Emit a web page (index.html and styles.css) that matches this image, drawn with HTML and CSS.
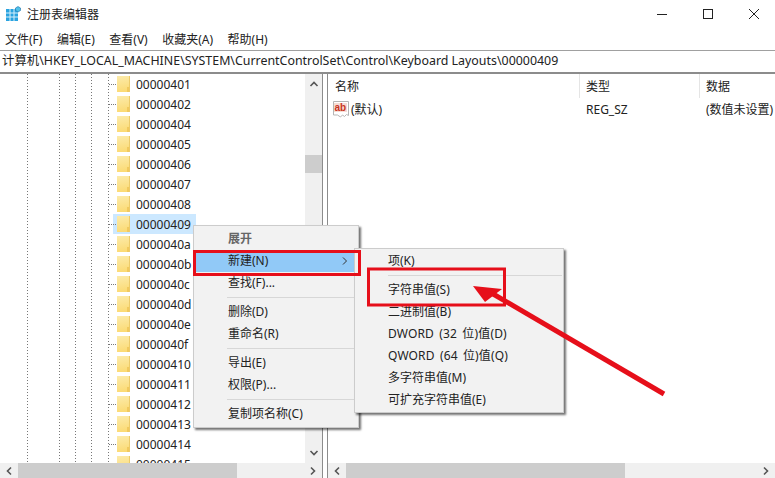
FILE: index.html
```html
<!DOCTYPE html>
<html lang="zh-CN">
<head>
    <meta charset="UTF-8">
    <title>注册表编辑器</title>
    <link rel="stylesheet" href="styles.css">
</head>
<body>
    <div class="window">
        <div class="titlebar">
            <svg class="app-icon" width="15" height="16" viewBox="0 0 15 16">
                <rect x="0" y="3" width="12" height="12" fill="#2aa3e0"/>
                <path d="M4 3v12M8 3v12M0 7h12M0 11h12" stroke="#d5effa" stroke-width="1"/>
                <path d="M12 0.5l2.5 1.5v2.5l-2.5 1.5-2.5-1.5v-2.5z" fill="#4fc1e9" stroke="#1b6fa8" stroke-width="0.6"/>
            </svg>
            <span class="title">注册表编辑器</span>
            <div class="controls">
                <svg width="10" height="10" viewBox="0 0 10 10"><path d="M0 5.5h10" stroke="#222" fill="none"/></svg>
                <svg width="10" height="10" viewBox="0 0 10 10"><rect x="0.5" y="0.5" width="9" height="9" stroke="#222" fill="none"/></svg>
                <svg width="10" height="10" viewBox="0 0 10 10"><path d="M0 0l10 10M10 0l-10 10" stroke="#222" fill="none"/></svg>
            </div>
        </div>
        <div class="menubar">
            <span>文件(F)</span>
            <span>编辑(E)</span>
            <span>查看(V)</span>
            <span>收藏夹(A)</span>
            <span>帮助(H)</span>
        </div>
        <div class="address">计算机\HKEY_LOCAL_MACHINE\SYSTEM\CurrentControlSet\Control\Keyboard Layouts\00000409</div>
        <div class="panes">
            <div class="left-pane">
                <div class="left-main">
                    <div class="tree">
                        <div class="row"><i class="folder"></i><span>00000401</span></div>
                        <div class="row"><i class="folder"></i><span>00000402</span></div>
                        <div class="row"><i class="folder"></i><span>00000404</span></div>
                        <div class="row"><i class="folder"></i><span>00000405</span></div>
                        <div class="row"><i class="folder"></i><span>00000406</span></div>
                        <div class="row"><i class="folder"></i><span>00000407</span></div>
                        <div class="row"><i class="folder"></i><span>00000408</span></div>
                        <div class="row selected"><i class="folder"></i><span>00000409</span></div>
                        <div class="row"><i class="folder"></i><span>0000040a</span></div>
                        <div class="row"><i class="folder"></i><span>0000040b</span></div>
                        <div class="row"><i class="folder"></i><span>0000040c</span></div>
                        <div class="row"><i class="folder"></i><span>0000040d</span></div>
                        <div class="row"><i class="folder"></i><span>0000040e</span></div>
                        <div class="row"><i class="folder"></i><span>0000040f</span></div>
                        <div class="row"><i class="folder"></i><span>00000410</span></div>
                        <div class="row"><i class="folder"></i><span>00000411</span></div>
                        <div class="row"><i class="folder"></i><span>00000412</span></div>
                        <div class="row"><i class="folder"></i><span>00000413</span></div>
                        <div class="row"><i class="folder"></i><span>00000414</span></div>
                        <div class="row"><i class="folder"></i><span>00000415</span></div>
                    </div>
                    <div class="vscroll">
                        <svg width="10" height="8" viewBox="0 0 10 8"><path d="M1.5 6l3.5-3.5 3.5 3.5" stroke="#555" stroke-width="1.6" fill="none"/></svg>
                        <div class="vtrack"><div class="vthumb"></div></div>
                        <svg width="10" height="8" viewBox="0 0 10 8"><path d="M1.5 2l3.5 3.5 3.5-3.5" stroke="#555" stroke-width="1.6" fill="none"/></svg>
                    </div>
                </div>
                <div class="hscroll">
                    <svg width="8" height="10" viewBox="0 0 8 10"><path d="M6 1.5l-3.5 3.5 3.5 3.5" stroke="#555" stroke-width="1.6" fill="none"/></svg>
                    <div class="htrack"><div class="hthumb thumb-left"></div></div>
                    <svg width="8" height="10" viewBox="0 0 8 10"><path d="M2 1.5l3.5 3.5-3.5 3.5" stroke="#555" stroke-width="1.6" fill="none"/></svg>
                </div>
            </div>
            <div class="splitter"></div>
            <div class="right-pane">
                <div class="list">
                    <div class="list-head">
                        <span class="col-name">名称</span>
                        <span class="col-type">类型</span>
                        <span class="col-data">数据</span>
                    </div>
                    <div class="list-row">
                        <span class="col-name">
                            <svg width="16" height="17" viewBox="0 0 16 17">
                                <path d="M0.5 0.5h15v14l-2-1-2 2-2-1.5-2 2-3-2-4 0z" fill="#fff" stroke="#b5b5b5"/>
                                <rect x="1" y="2" width="13" height="9" fill="#f7dcd4"/>
                                <text x="1.5" y="10" class="ab-text">ab</text>
                            </svg>
                            (默认)
                        </span>
                        <span class="col-type">REG_SZ</span>
                        <span class="col-data">(数值未设置)</span>
                    </div>
                </div>
                <div class="hscroll">
                    <svg width="8" height="10" viewBox="0 0 8 10"><path d="M6 1.5l-3.5 3.5 3.5 3.5" stroke="#555" stroke-width="1.6" fill="none"/></svg>
                    <div class="htrack"><div class="hthumb thumb-right"></div></div>
                    <svg width="8" height="10" viewBox="0 0 8 10"><path d="M2 1.5l3.5 3.5-3.5 3.5" stroke="#555" stroke-width="1.6" fill="none"/></svg>
                </div>
            </div>
        </div>

        <div class="menu menu-main">
            <div class="item item-bold">展开</div>
            <div class="item item-active">新建(N)<svg class="sub-arrow" width="6" height="8" viewBox="0 0 6 8"><path d="M1 0.5l3.5 3.5-3.5 3.5" stroke="#333" fill="none"/></svg></div>
            <div class="item">查找(F)...</div>
            <div class="sep"></div>
            <div class="item">删除(D)</div>
            <div class="item">重命名(R)</div>
            <div class="sep"></div>
            <div class="item">导出(E)</div>
            <div class="item">权限(P)...</div>
            <div class="sep"></div>
            <div class="item">复制项名称(C)</div>
        </div>
        <div class="menu menu-sub">
            <div class="item">项(K)</div>
            <div class="sep"></div>
            <div class="item">字符串值(S)</div>
            <div class="item">二进制值(B)</div>
            <div class="item item-wide">DWORD (32 位)值(D)</div>
            <div class="item item-wide">QWORD (64 位)值(Q)</div>
            <div class="item">多字符串值(M)</div>
            <div class="item">可扩充字符串值(E)</div>
        </div>

        <!-- red marks drawn over the screenshot -->
        <svg class="marks" width="775" height="478" viewBox="0 0 775 478">
            <rect x="194.5" y="251.5" width="165" height="23" fill="none" stroke="#e60f1a" stroke-width="3"/>
            <rect x="368.5" y="269" width="136" height="36" fill="none" stroke="#e60f1a" stroke-width="3"/>
            <path d="M664 394L488 291" stroke="#e60f1a" stroke-width="5" fill="none"/>
            <path d="M473 286L502 289L485 302z" fill="#e60f1a"/>
        </svg>
    </div>
</body>
</html>
```

FILE: styles.css
```css
html, body {
    margin: 0;
    padding: 0;
}
body {
    font-family: "Noto Sans", "Noto Sans CJK SC", sans-serif;
    font-size: 12px;
    color: #222;
    background: #fff;
}
.window {
    position: relative;
    width: 775px;
    height: 478px;
    overflow: hidden;
    display: flex;
    flex-direction: column;
}
.titlebar {
    height: 28px;
    display: flex;
    align-items: center;
    padding-left: 6px;
    flex: none;
}
.app-icon {
    margin-right: 6px;
}
.controls {
    margin-left: auto;
    display: flex;
    gap: 36px;
    padding-right: 16px;
}
.menubar {
    height: 22px;
    display: flex;
    align-items: center;
    gap: 14.5px;
    padding-left: 5px;
    flex: none;
}
.address {
    height: 21px;
    line-height: 20px;
    padding-left: 2px;
    font-size: 12.4px;
    border-top: 1px solid #a0a0a0;
    border-bottom: 2px solid #8c8c8c;
    white-space: nowrap;
    flex: none;
}
.panes {
    flex: 1;
    display: flex;
    min-height: 0;
}
.left-pane {
    width: 322px;
    display: flex;
    flex-direction: column;
}
.left-main {
    flex: 1;
    display: flex;
    min-height: 0;
}
.tree {
    flex: 1;
    overflow: hidden;
    background-image:
        repeating-linear-gradient(#777 0 1px, transparent 1px 3px),
        repeating-linear-gradient(#777 0 1px, transparent 1px 3px),
        repeating-linear-gradient(#777 0 1px, transparent 1px 3px),
        repeating-linear-gradient(#777 0 1px, transparent 1px 3px),
        repeating-linear-gradient(#777 0 1px, transparent 1px 3px);
    background-size: 1px 100%;
    background-repeat: no-repeat;
    background-position: 27px 0, 59px 0, 75px 0, 91px 0, 108px 0;
}
.row {
    height: 20px;
    width: 192px;
    padding-left: 117px;
    display: flex;
    align-items: center;
    position: relative;
}
.row::before {
    content: "";
    position: absolute;
    left: 109px;
    top: 10px;
    width: 7px;
    border-top: 1px dotted #777;
}
.row span {
    margin-left: 6px;
    padding-right: 2px;
}
.row.selected {
    background: linear-gradient(#cce8ff, #cce8ff) no-repeat 113px 0 / 83px 100%;
}
.folder {
    width: 13px;
    height: 16px;
    flex: none;
    position: relative;
    background: linear-gradient(170deg, #fcebab, #fbd970);
    box-shadow: inset -1px 0 0 #eccb6a;
}
.folder::after {
    content: "";
    position: absolute;
    right: 1px;
    bottom: 0;
    width: 2px;
    height: 5px;
    background: #f1c95e;
}
.vscroll {
    width: 17px;
    background: #f0f0f0;
    display: flex;
    flex-direction: column;
    align-items: center;
    padding: 6px 0;
    box-sizing: border-box;
}
.vtrack {
    flex: 1;
    width: 100%;
    padding-top: 67px;
}
.vthumb {
    height: 18px;
    background: #cdcdcd;
}
.hscroll {
    height: 15px;
    flex: none;
    background: #f0f0f0;
    display: flex;
    align-items: center;
    padding: 0 5px;
    gap: 5px;
}
.htrack {
    flex: 1;
    height: 100%;
}
.hthumb {
    height: 100%;
    background: #cdcdcd;
}
.thumb-left {
    width: 219px;
}
.thumb-right {
    width: 279px;
}
.splitter {
    width: 4px;
    border-left: 1px solid #8c8c8c;
    border-right: 1px solid #8c8c8c;
}
.right-pane {
    flex: 1;
    display: flex;
    flex-direction: column;
    min-width: 0;
}
.list {
    flex: 1;
    min-height: 0;
}
.list-head, .list-row {
    display: flex;
    white-space: nowrap;
}
.list-head {
    height: 24px;
    align-items: center;
}
.list-row {
    height: 22px;
    align-items: center;
}
.col-name {
    width: 252px;
    padding-left: 7px;
    box-sizing: border-box;
    flex: none;
    display: flex;
    align-items: center;
}
.col-name svg {
    margin-left: -2px;
    margin-right: 2px;
}
.col-type {
    width: 120px;
    padding-left: 6px;
    box-sizing: border-box;
    flex: none;
}
.col-data {
    padding-left: 6px;
}
.list-head .col-name, .list-head .col-type {
    border-right: 1px solid #e5e5e5;
    height: 100%;
    display: flex;
    align-items: center;
}
.ab-text {
    font-family: "Liberation Sans", sans-serif;
    font-size: 10px;
    font-weight: bold;
    fill: #c8351f;
}
.menu {
    position: absolute;
    background: #f2f2f2;
    border: 1px solid #ccc;
    box-shadow: 2px 2px 2px rgba(0, 0, 0, 0.55);
    box-sizing: border-box;
}
.menu-main {
    left: 193px;
    top: 225px;
    width: 166px;
    height: 203px;
    padding-top: 2px;
}
.menu-sub {
    left: 354px;
    top: 248px;
    width: 210px;
    height: 165px;
    padding-top: 1px;
}
.item {
    height: 22px;
    line-height: 22px;
    padding-left: 33px;
    position: relative;
    white-space: nowrap;
}
.menu-main .item {
    padding-left: 34px;
}
.item-wide {
    word-spacing: 2px;
    letter-spacing: 0.15px;
}
.item-bold {
    font-weight: bold;
    color: #666;
}
.item-active {
    background: #91c9f7;
}
.sub-arrow {
    position: absolute;
    right: 10px;
    top: 7px;
}
.sep {
    height: 1px;
    margin: 3px 1px 3px 33px;
    background: #d7d7d7;
}
.marks {
    position: absolute;
    left: 0;
    top: 0;
    pointer-events: none;
}
```
